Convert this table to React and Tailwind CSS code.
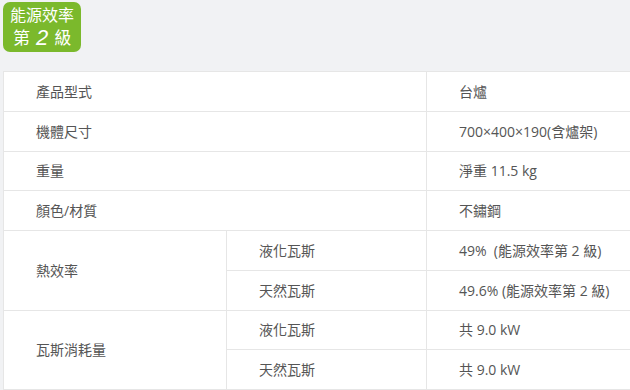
import React from 'react';

const rows = [
  { label: '產品型式', value: '台爐' },
  { label: '機體尺寸', value: '700×400×190(含爐架)' },
  { label: '重量', value: '淨重 11.5 kg' },
  { label: '顏色/材質', value: '不鏽鋼' },
];

const groups = [
  {
    label: '熱效率',
    items: [
      { sub: '液化瓦斯', value: '49%  (能源效率第 2 級)' },
      { sub: '天然瓦斯', value: '49.6% (能源效率第 2 級)' },
    ],
  },
  {
    label: '瓦斯消耗量',
    items: [
      { sub: '液化瓦斯', value: '共 9.0 kW' },
      { sub: '天然瓦斯', value: '共 9.0 kW' },
    ],
  },
];

const cell = 'h-[39.75px] border border-[#e6e6e6] pl-8 py-0 text-left align-middle font-normal';

export default function App() {
  return (
    <div className="h-[390px] w-[630px] overflow-hidden bg-[#f1f2f4] text-[14px] text-[#555] [font-family:'Open_Sans','Noto_Sans_CJK_TC',sans-serif]">
      <div className="pl-[3px] pt-[2px]">
        <div className="flex h-[50px] w-[78px] flex-col items-center justify-center rounded-[7px] bg-[#7bb92c] text-white">
          <span className="text-[16px] leading-[20px]">能源效率</span>
          <span className="mt-[2px] flex h-[22px] items-center gap-[6px] text-[17px] leading-[22px]">
            第<span className="text-[22px] italic leading-[22px] [font-family:'Liberation_Sans',sans-serif]">2</span>級
          </span>
        </div>
      </div>
      <div className="mt-[19px] pl-[3px]">
        <table className="w-[660px] table-fixed border-collapse bg-white">
          <colgroup>
            <col className="w-[223px]" />
            <col className="w-[200px]" />
            <col />
          </colgroup>
          <tbody>
            {rows.map((r) => (
              <tr key={r.label}>
                <th colSpan={2} className={cell}>{r.label}</th>
                <td className={cell}>{r.value}</td>
              </tr>
            ))}
            {groups.map((g) =>
              g.items.map((it, i) => (
                <tr key={g.label + it.sub}>
                  {i === 0 && (
                    <th rowSpan={2} className={cell}>{g.label}</th>
                  )}
                  <td className={cell}>{it.sub}</td>
                  <td className={cell + ' whitespace-pre'}>{it.value}</td>
                </tr>
              ))
            )}
          </tbody>
        </table>
      </div>
    </div>
  );
}
